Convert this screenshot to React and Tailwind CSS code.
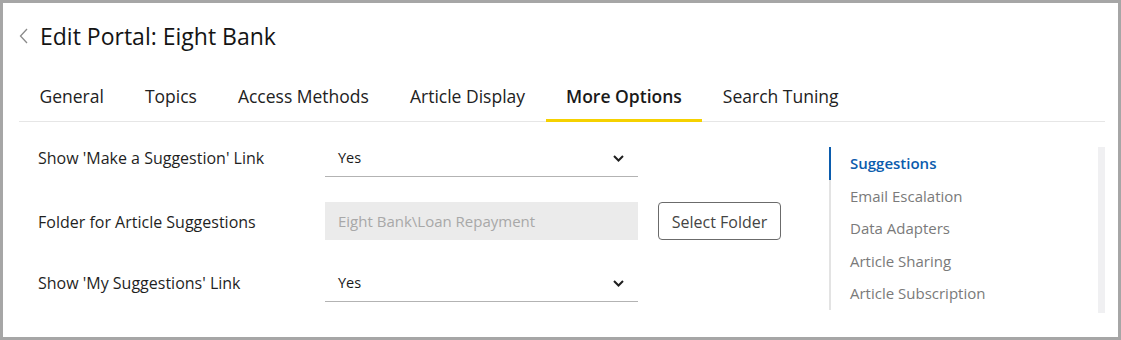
import { useState } from 'react';

const TABS = ['General', 'Topics', 'Access Methods', 'Article Display', 'More Options', 'Search Tuning'];

const SECTIONS = ['Suggestions', 'Email Escalation', 'Data Adapters', 'Article Sharing', 'Article Subscription'];

function ChevronDown() {
  return (
    <svg width="11" height="7" viewBox="0 0 11 7" fill="none" className="mt-[2px]">
      <polyline points="1,1 5.5,5.5 10,1" stroke="#1f1f1f" strokeWidth="2" />
    </svg>
  );
}

function SelectField({ value }) {
  return (
    <div className="flex h-10 w-[313px] items-center justify-between border-b border-[#b3b3b3] pl-[13px] pr-[14px] pt-[2px] text-[14.5px] text-[#1a1a1a]">
      <span>{value}</span>
      <ChevronDown />
    </div>
  );
}

export default function App() {
  const [tab, setTab] = useState('More Options');
  const [section, setSection] = useState('Suggestions');

  return (
    <div
      className="h-[340px] w-[1121px] border-[3px] border-[#a6a6a6] bg-white"
      style={{ fontFamily: '"Open Sans", "Noto Sans", sans-serif' }}
    >
      {/* Header */}
      <div className="ml-4 mt-[18px] flex h-[30px] items-center gap-3">
        <svg width="9" height="16" viewBox="0 0 9 16" fill="none">
          <polyline points="8,1 1.5,8 8,15" stroke="#8a8a8a" strokeWidth="1.3" />
        </svg>
        <h1 className="text-[23px] leading-[30px] text-[#141414]">Edit Portal: Eight Bank</h1>
      </div>

      {/* Tabs */}
      <div className="ml-4 mr-[13px] mt-[21px] flex border-b border-[#e6e6e6]">
        {TABS.map((t) => (
          <button
            key={t}
            onClick={() => setTab(t)}
            className={
              'mb-[-1px] border-b-[3px] px-[20.5px] pb-[11px] pt-[12px] text-[17.5px] leading-[24px] ' +
              (t === tab
                ? 'border-[#f5d100] font-semibold text-[#1a1a1a]'
                : 'border-transparent text-[#222]')
            }
          >
            {t}
          </button>
        ))}
      </div>

      {/* Body */}
      <div className="ml-4 mr-[13px] flex pt-[15px]">
        <div className="flex flex-1 flex-col pl-[19px]">
          <div className="flex h-10 items-center">
            <label className="w-[287px] pt-[2px] text-[16px] text-[#1f1f1f]">Show 'Make a Suggestion' Link</label>
            <SelectField value="Yes" />
          </div>

          <div className="mt-6 flex h-10 items-center">
            <label className="w-[287px] pt-px text-[16px] text-[#1f1f1f]">Folder for Article Suggestions</label>
            <div className="flex h-[38px] w-[313px] items-center bg-[#ebebeb] pl-[13px] pt-px text-[15px] text-[#a8a8a8]">
              Eight Bank\Loan Repayment
            </div>
            <button className="ml-5 h-[38px] w-[123px] rounded-[4px] border border-[#6b6b6b] pt-px text-[16px] text-[#444]">
              Select Folder
            </button>
          </div>

          <div className="mt-[21px] flex h-10 items-center">
            <label className="w-[287px] pt-[2px] text-[16px] text-[#1f1f1f]">Show 'My Suggestions' Link</label>
            <SelectField value="Yes" />
          </div>
        </div>

        {/* Section nav */}
        <div className="mt-[10px] flex h-[166px] w-[276px]">
          <nav className="flex h-[163px] flex-1 flex-col border-l-2 border-[#e3e3e3]">
            {SECTIONS.map((s) => (
              <button
                key={s}
                onClick={() => setSection(s)}
                className={
                  'flex h-[32.5px] items-center pl-[19px] text-left text-[15px] ' +
                  (s === section
                    ? '-ml-[2px] border-l-2 border-[#0b5cad] font-semibold text-[#0b5cad]'
                    : 'text-[#7a7a7a]')
                }
              >
                {s}
              </button>
            ))}
          </nav>
          <div className="w-[7px] bg-[#f0f0f2]" />
        </div>
      </div>
    </div>
  );
}
